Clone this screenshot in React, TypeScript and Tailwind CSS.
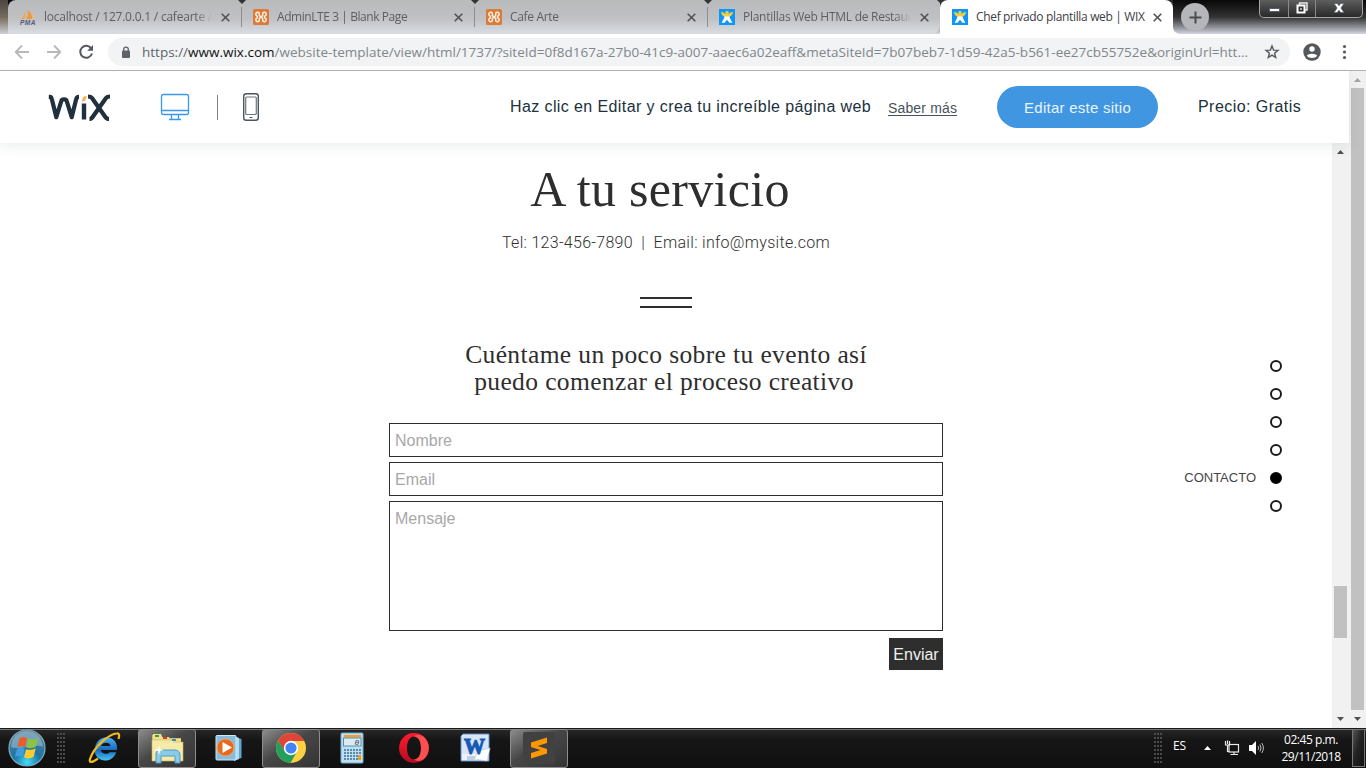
import React from "react";

const WixFavicon = () => (
  <svg width="16" height="16" viewBox="0 0 16 16" className="shrink-0">
    <rect width="16" height="16" fill="#0d96f6" />
    <path d="M5.200 7H10.800L10.600 8.600 13.400 13.800H10.400L8 10.800 5.600 13.800H2.600L5.400 8.600Z" fill="#fff" />
    <path d="M2 3C3.500 2.800 5 3.600 6.200 4.800H9.800C11 3.600 12.500 2.800 14 3 13.600 5.400 12.400 7 10.800 7.600H5.200C3.600 7 2.400 5.400 2 3Z" fill="#f3cf3a" />
    <circle cx="8" cy="3.500" r="1.800" fill="#d9c878" />
  </svg>
);

const XamppFavicon = () => (
  <svg width="16" height="16" viewBox="0 0 16 16" className="shrink-0">
    <rect width="16" height="16" rx="1.500" fill="#dd7a36" />
    <path d="M6.300 4.200A1.900 1.900 0 1 0 4 7C4.700 7.300 4.700 8.700 4 9A1.900 1.900 0 1 0 6.300 11.800V9.500L7.300 8.500H8.700L9.700 9.500V11.800A1.900 1.900 0 1 0 12 9C11.300 8.700 11.300 7.300 12 7A1.900 1.900 0 1 0 9.700 4.200V6.500L8.700 7.500H7.300L6.300 6.500Z" fill="none" stroke="#fbeee2" strokeWidth="1.500" />
  </svg>
);

const PmaFavicon = () => (
  <svg width="16" height="16" viewBox="0 0 16 16" className="shrink-0">
    <path d="M5 1.5C6 5 5.8 8 4.5 10H1C3.2 7.8 4.5 5 5 1.5Z" fill="#f3a64c" />
    <path d="M7.5 1C11 3.5 12.5 6.5 12 10H6.5C8 7 8.200 4 7.500 1Z" fill="#ee9a3a" />
    <path d="M12 4.500C13.800 6 14.500 8 14.500 10H12.800Z" fill="#f6bb74" />
    <text x="0" y="15.500" fontFamily="Liberation Sans" fontSize="6.500" fontWeight="700" fontStyle="italic" fill="#555a80" textLength="15.500">PMA</text>
  </svg>
);

const Close = () => (
  <svg width="9" height="9" viewBox="0 0 9 9" className="shrink-0">
    <path d="M0.700 0.700L8.300 8.300M8.300 0.700L0.700 8.300" stroke="#505357" strokeWidth="1.600" />
  </svg>
);

function Tab({ icon, title, active, spacing, last }: { icon: React.ReactNode; title: string; active?: boolean; spacing: string; last?: boolean }) {
  return (
    <div className={"relative flex h-[34px] w-[233px] shrink-0 items-center pl-[12px] " + (active ? "rounded-t-[8px] bg-white" : "")}>
      {icon}
      <div className={"ml-[8px] h-[20px] w-[168px] whitespace-nowrap text-[12px] leading-[20px] " + spacing + " " + (active ? "text-[#3c4043]" : "mask-r-from-90% mask-r-to-100% text-[#5b5f64]")}>
        {title}
      </div>
      <div className="ml-[9px] flex w-[10px]"><Close /></div>
      {!active && !last && <div className="absolute top-[7px] -right-px h-[20px] w-px bg-[#8b8d90]" />}
      {!active && <div className="absolute -top-px -right-[6px] h-[5px] w-[10px] bg-[#333] [clip-path:polygon(0_0,100%_0,50%_100%)]" />}
    </div>
  );
}

function Chrome() {
  return (
    <header className="shrink-0 font-['Open_Sans','Noto_Sans',sans-serif]">
      <div className="flex h-[34px] bg-linear-to-b from-[#050505] via-[#3a3a3a] via-50% to-[#d3d8e2]">
        <div className="h-full w-[8px] shrink-0 bg-linear-to-b from-[#4b4641] via-[#75695a] via-50% to-[#cdd1d8]" />
        <div className="flex w-[932px] shrink-0 rounded-tl-[8px] rounded-br-[8px] bg-linear-to-b from-[#b9babc] via-[#c0c1c4] via-55% to-[#d9dde2]">
          <Tab icon={<PmaFavicon />} title="localhost / 127.0.0.1 / cafearte /" spacing="tracking-[-0.220px]" />
          <Tab icon={<XamppFavicon />} title="AdminLTE 3 | Blank Page" spacing="tracking-[-0.430px]" />
          <Tab icon={<XamppFavicon />} title="Cafe Arte" spacing="tracking-[-0.330px]" />
          <Tab icon={<WixFavicon />} title="Plantillas Web HTML de Restaur" spacing="tracking-[-0.270px]" last />
        </div>
        <div className="flex bg-linear-to-b from-[#2b2b2b] from-50% to-white to-50%">
          <Tab icon={<WixFavicon />} title="Chef privado plantilla web | WIX" active spacing="tracking-[-0.340px]" />
        </div>
        <div className="h-full w-[193px] bg-white">
          <div className="flex h-full w-full rounded-bl-[7px] bg-linear-to-b from-[#080808] via-[#333] via-50% to-[#d3d6e2]">
            <div className="mt-[3px] ml-[8px] flex size-[28px] items-center justify-center rounded-full bg-[#b5b6b9]">
              <svg width="13" height="13" viewBox="0 0 13 13"><path d="M6.500 0.500V12.500M0.500 6.500H12.500" stroke="#4a4c50" strokeWidth="2" /></svg>
            </div>
            <div className="ml-[50px] flex h-[18px] w-[104px] rounded-b-[5px] border border-t-0 border-[#a5a5a5] bg-linear-to-b from-[#5e5e5e] to-[#292929]">
              <div className="flex w-[29px] items-center justify-center border-r border-[#8a8a8a]"><div className="mt-[3px] h-[4px] w-[11px] border border-[#555b70] bg-white" /></div>
              <div className="flex w-[27px] items-center justify-center border-r border-[#8a8a8a]">
                <svg width="12" height="12" viewBox="0 0 12 12" className="-mt-px"><path d="M3.500 3V1H11V8H9" fill="none" stroke="#e8e8ee" strokeWidth="1.500" /><rect x="1.500" y="3.500" width="7" height="7" fill="#333" stroke="#fff" strokeWidth="2" /><rect x="4" y="6" width="2" height="2" fill="#aaa" /></svg>
              </div>
              <div className="flex flex-1 items-center justify-center">
                <svg width="12" height="10" viewBox="0 0 12 10" className="-mt-px"><path d="M1 0.500H4.300L6 2.700 7.700 0.500H11L7.900 5 11 9.500H7.700L6 7.300 4.300 9.500H1L4.100 5Z" fill="#fff" stroke="#555b70" strokeWidth=".7" /></svg>
              </div>
            </div>
          </div>
        </div>
      </div>
      <div className="flex h-[37px] items-center border-b border-[#b3b3b3] bg-white">
        <svg width="108" height="36" viewBox="0 0 108 36" fill="none">
          <path d="M29 18H16M22 11.500L15.700 18 22 24.500M47 18H60M54 11.500L60.300 18 54 24.500" stroke="#b6b8ba" strokeWidth="1.800" />
          <path d="M91.300 14.500A6 6 0 1 0 92 19.500" stroke="#55585c" strokeWidth="2" />
          <path d="M93 11V16.800H87.200Z" fill="#55585c" />
        </svg>
        <div className="flex h-[28px] w-[1182px] items-center rounded-full bg-[#f1f3f4] pr-[10px] pl-[13px]">
          <svg width="10" height="13" viewBox="0 0 10 13"><rect x="1" y="4.500" width="8" height="7.500" rx="1" fill="#5f6368" /><path d="M2.700 5V3.500A2.300 2.300 0 0 1 7.300 3.500V5" fill="none" stroke="#5f6368" strokeWidth="1.300" /></svg>
          <div className="ml-[11px] h-[20px] w-[1110px] text-[13.500px] leading-[20px] whitespace-nowrap text-[#80868b]">
            <span className="text-[#5f6368]">https://</span><span className="text-[#111]">www.wix.com</span>/website-template/view/html/1737/?siteId=0f8d167a-27b0-41c9-a007-aaec6a02eaff&amp;metaSiteId=7b07beb7-1d59-42a5-b561-ee27cb55752e&amp;originUrl=htt...
          </div>
          <svg width="16" height="16" viewBox="0 0 16 16" className="ml-auto"><path d="M8 2L9.600 6.100 14 6.400 10.600 9.200 11.700 13.500 8 11.100 4.300 13.500 5.400 9.200 2 6.400 6.400 6.100Z" fill="none" stroke="#55585c" strokeWidth="1.400" /></svg>
        </div>
        <svg width="76" height="36" viewBox="0 0 76 36">
          <circle cx="22" cy="18" r="8.700" fill="#55585c" />
          <circle cx="22" cy="15" r="2.700" fill="#fff" /><path d="M16.800 21.700C18 19 26 19 27.200 21.700 25 24.700 19 24.700 16.800 21.700Z" fill="#fff" />
          <g fill="#55585c"><circle cx="54.500" cy="12.500" r="1.600" /><circle cx="54.500" cy="18" r="1.600" /><circle cx="54.500" cy="23.500" r="1.600" /></g>
        </svg>
      </div>
    </header>
  );
}

const Arrow = ({ down, light }: { down?: boolean; light?: boolean }) => (
  <svg width="17" height="17" viewBox="0 0 17 17" className="shrink-0">
    <path d={down ? "M5 7H12L8.500 11Z" : "M5 11H12L8.500 7Z"} fill={light ? "#a3a3a3" : "#505050"} />
  </svg>
);

function WixBar() {
  return (
    <div className="relative z-10 flex h-[72px] shrink-0 items-center bg-white shadow-[0_4px_12px_rgba(22,45,61,0.08)]">
      <svg width="280" height="72" viewBox="0 0 280 72" fill="none">
        <g stroke="#20303c" strokeWidth="4.200">
          <path d="M48.800 25.800H50C51 25.800 51.500 26.500 51.800 28L56.300 46.200 61.300 30C61.900 27.800 66.100 27.800 66.700 30L71.700 46.200 76.200 28C76.500 26.500 77.500 25.800 79 25.800" strokeLinejoin="round" />
          <path d="M84 32.500V48.500" strokeWidth="4.400" />
          <path d="M88 25.500C90 25.500 91 25.700 92 27L105 45.500C106 47 107 48 109 48M110 25.500C108 25.500 107 25.700 106 27L93 45.500C92 47 91 48 89.500 48" />
        </g>
        <path d="M82 30.500C82 27 83.500 25 86.500 25 86.500 28.500 85 30.500 82 30.500Z" fill="#fbad55" />
        <g stroke="#3899ec" strokeWidth="1.300">
          <rect x="161.500" y="23.500" width="27" height="20" rx="2" />
          <path d="M161.500 39.500H188.500M171.500 43.500V48.500M178.500 43.500V48.500M169 48.500H181" />
        </g>
        <path d="M217.500 24V49" stroke="#7a8289" />
        <rect x="243.700" y="22.700" width="14.600" height="26.600" rx="2.500" stroke="#4a5560" strokeWidth="1.400" />
        <rect x="245.700" y="26" width="10.600" height="17.500" rx="1" stroke="#6e7780" strokeWidth="1.200" />
        <path d="M249.500 46.500H252.500" stroke="#4a5560" />
      </svg>
      <div className="ml-[230px] flex w-[378px] whitespace-nowrap font-['Liberation_Sans',sans-serif] text-[16px] tracking-[0.400px] text-[#20303c]">
        Haz clic en Editar y crea tu increíble página web
      </div>
      <a className="w-[109px] pt-[3px] font-['Liberation_Sans',sans-serif] text-[14px] tracking-[0.150px] whitespace-nowrap text-[#46535d] underline underline-offset-2">Saber más</a>
      <button className="flex h-[42px] w-[161px] items-center justify-center rounded-full bg-[#4096e1] pt-[2px] font-['Liberation_Sans',sans-serif] text-[15px] tracking-[0.260px] text-[#eaf4fc]">Editar este sitio</button>
      <span className="ml-[40px] whitespace-nowrap font-['Liberation_Sans',sans-serif] text-[16px] tracking-[0.450px] text-[#20303c]">Precio: Gratis</span>
    </div>
  );
}

const fieldClass = "block w-full resize-none rounded-none border border-[#2e2e2e] bg-white px-[5px] text-[16px] outline-none placeholder:text-[#a8a8a8]";

function Contact() {
  return (
    <main className="flex w-[1332px] justify-center text-[#2e2e2e]">
      <div className="flex w-[554px] flex-col items-center">
        <h1 className="mt-[16px] mr-[12px] h-[60px] whitespace-nowrap font-['Liberation_Serif',serif] text-[50px] leading-[60px] tracking-[0.300px]">A tu servicio</h1>
        <p className="mt-[14px] h-[20px] whitespace-pre font-['Roboto',sans-serif] text-[16px] leading-[20px] font-light tracking-[0.300px]">Tel: 123-456-7890  |  Email: info@mysite.com</p>
        <div className="mt-[44px] h-[11px] w-[52px] border-y-2 border-[#2e2e2e]" />
        <h2 className="mt-[33px] whitespace-nowrap text-center font-['Liberation_Serif',serif] text-[25.500px] leading-[27px] tracking-[0.380px]">Cuéntame un poco sobre tu evento así<br /><span className="mr-[4px]">puedo comenzar el proceso creativo</span></h2>
        <form className="mt-[28px] flex w-full flex-col gap-[5px] font-['Liberation_Sans',sans-serif]">
          <input className={fieldClass + " h-[34px] pt-[2px]"} placeholder="Nombre" />
          <input className={fieldClass + " h-[34px] pt-[2px]"} placeholder="Email" />
          <textarea className={fieldClass + " h-[130px] pt-[5px]"} placeholder="Mensaje" />
          <button type="button" className="mt-[2px] h-[32px] w-[54px] self-end bg-[#2e2e2e] pt-[2px] text-[16px] text-[#f0f0f0]">Enviar</button>
        </form>
      </div>
      <nav className="absolute top-[217px] right-[67px] flex flex-col items-end gap-[16px]">
        {[0, 1, 2, 3, 4, 5].map((i) => (
          <div key={i} className="flex h-[12px] items-center gap-[14px]">
            {i === 4 && <span className="font-['Liberation_Sans',sans-serif] text-[13px] leading-[12px] text-[#444]">CONTACTO</span>}
            <i className={"size-[12px] rounded-full border-2 " + (i === 4 ? "border-black bg-black" : "border-[#1b1b1b]")} />
          </div>
        ))}
      </nav>
    </main>
  );
}

const StartOrb = () => (
  <svg width="40" height="40" viewBox="0 0 40 40">
    <defs>
      <radialGradient id="orb" cx=".5" cy=".9" r=".8"><stop offset="0" stopColor="#3ee0fb" /><stop offset=".45" stopColor="#1b75a8" /><stop offset="1" stopColor="#4e7d97" /></radialGradient>
    </defs>
    <circle cx="20" cy="20" r="18" fill="url(#orb)" stroke="#87a8b8" strokeWidth="1.200" />
    <path d="M4 19C5 8 12 3 20 3S35 8 36 19C28 15 14 23 4 19Z" fill="#c5dce6" opacity=".42" />
    <path d="M12.500 10.500C15 8.500 17.500 8.500 20 10L18 19C15 17.500 13 18 10.500 19.500Z" fill="#ee5b27" />
    <path d="M21.300 10.500C24.300 12 27.500 12 31 10L29 18.500C26 20.500 22.500 20.500 19.400 19.500Z" fill="#8bc53e" />
    <path d="M10 21C13 19.500 15 19.500 17.700 20.500L15.700 29C13.200 27.500 10.500 27.500 7.800 29Z" fill="#3f9ddd" />
    <path d="M19 21.200C22 22.200 25.500 22.200 28.700 20.300L26.700 28.800C23.500 30.900 20 30.900 17 29.200Z" fill="#fdcb2f" />
  </svg>
);

const IeIcon = () => (
  <svg width="34" height="34" viewBox="0 0 34 34">
    <defs><linearGradient id="ie" x1="0" y1="0" x2="0" y2="1"><stop stopColor="#4bb0ef" /><stop offset=".55" stopColor="#1769bf" /><stop offset="1" stopColor="#49c2f2" /></linearGradient></defs>
    <path d="M30 19H13.800C14.200 23 20.500 24 22.500 21.300H29.300C27 27.500 22 30 17.500 29.500 10 28.800 6.500 22.500 8 16.500 9.500 9.500 15 6 20 6.300 27 7 30.800 12 30 19ZM14 15H23.500C23 10.500 15.500 10.500 14 15Z" fill="url(#ie)" />
    <path d="M31.500 8C33 3.500 32 2 29.500 2.500 21 3.500 7 16 3 28 2 31.500 4 32.500 11 27.500" fill="none" stroke="#f2b91d" strokeWidth="2.200" />
  </svg>
);

const FolderIcon = () => (
  <svg width="34" height="32" viewBox="0 0 34 32">
    <path d="M2 3H11L13 6H31V28H2Z" fill="#d8bf63" />
    <path d="M3 2H11L12 5H19L20 7H31V27H3Z" fill="#f0de8b" /><path d="M2 8H22L24 10H33V29H2Z" fill="#f7e9a6" stroke="#cdb55e" strokeWidth=".6" />
    <rect x="5" y="3" width="4" height="2" fill="#28aa35" /><rect x="13" y="5" width="4" height="2" fill="#da3b2b" /><rect x="22" y="7" width="4" height="2" fill="#2c93da" />
    <path d="M6 31V22C6 19 8 18 10 18H25C28 18 30 20 30 23V31H25V24H11V31Z" fill="#8acbe8" stroke="#4a9cc6" />
    <path d="M9 13L10 17 14 18 10 19 9 23 8 19 4 18 8 17Z" fill="#fff" />
  </svg>
);

const MediaIcon = () => (
  <svg width="30" height="28" viewBox="0 0 30 28">
    <path d="M21 3L27.500 5V24L21 26Z" fill="#5ea6ce" /><path d="M20 2L25 4V25L20 27Z" fill="#b5dcee" /><rect x="2" y="1.500" width="20" height="24.500" rx="1" fill="#86bdde" stroke="#cce9f6" />
    <circle cx="11.500" cy="13.500" r="8.500" fill="#e66a1d" stroke="#f6a15d" /><path d="M8.500 8L18 13.500 8.500 19Z" fill="#fff" />
  </svg>
);

const ChromeIcon = () => (
  <svg width="32" height="32" viewBox="0 0 32 32">
    <circle cx="16" cy="16" r="15" fill="#fdd043" />
    <path d="M16 1A15 15 0 0 0 3 8.500L9.500 19.500 16 9H29.300A15 15 0 0 0 16 1Z" fill="#df4438" />
    <path d="M3 8.500A15 15 0 0 0 15.500 31L22 19.600A7 7 0 0 1 10 19.500Z" fill="#22a05b" />
    <circle cx="16" cy="16" r="7.200" fill="#fff" /><circle cx="16" cy="16" r="5.600" fill="#4284f3" />
  </svg>
);

const CalcIcon = () => (
  <svg width="24" height="32" viewBox="0 0 24 32">
    <rect x="1" y="1" width="22" height="30" rx="1" fill="#bcdff1" stroke="#72afcf" />
    <rect x="4" y="3" width="17" height="2.500" fill="#ef9e36" /><rect x="3.500" y="6" width="17.500" height="8" fill="#dcebf1" stroke="#5c8ba5" />
    <text x="14.500" y="13" fontFamily="Liberation Mono" fontStyle="italic" fontSize="8" fill="#243a47">0</text>
    {[17, 20, 23, 26].map((y) => <g key={y} fill="#5a8aa8">{[4, 7, 10, 13, 16, 19].map((x) => <rect key={x} x={x} y={y} width="2" height="2" />)}</g>)}
    <rect x="18" y="23" width="3" height="5" fill="#f19a20" />
  </svg>
);

const OperaIcon = () => (
  <svg width="32" height="32" viewBox="0 0 32 32">
    <defs><linearGradient id="op" x1="0" y1="0" x2="0" y2="1"><stop stopColor="#ff1b2d" /><stop offset="1" stopColor="#b40c20" /></linearGradient></defs>
    <path fillRule="evenodd" d="M16 1A15 15 0 1 0 16 31 15 15 0 1 0 16 1ZM16 4.500C20.500 4.500 23 9.500 23 16S20.500 27.500 16 27.500 9 22.500 9 16 11.500 4.500 16 4.500Z" fill="url(#op)" />
    <path d="M16 4.500C18 2.500 23 2.500 26 5A15 15 0 0 1 26 27C23 29.500 18 29.500 16 27.500 20.500 27.500 23 22.500 23 16S20.500 4.500 16 4.500Z" fill="#fb4e50" />
  </svg>
);

const WordIcon = () => (
  <svg width="32" height="30" viewBox="0 0 32 30">
    <path d="M4 1H30V28H2V3Z" fill="#edf3fb" stroke="#5b87c8" /><path d="M4 2H29V21H3V3Z" fill="#d6e5f7" />
    <path d="M20 18L31 15 28 28 15 26Z" fill="#fff" stroke="#b9c9df" strokeWidth=".7" /><path d="M8 24H16M8 26H15" stroke="#94abc8" />
    <text x="5" y="21" fontFamily="Liberation Serif" fontSize="24" fontWeight="700" fill="#1558b5" stroke="#1558b5" strokeWidth="1.200" textLength="21" lengthAdjust="spacingAndGlyphs">W</text>
  </svg>
);

const SublimeIcon = () => (
  <svg width="32" height="32" viewBox="0 0 32 32">
    <rect width="32" height="32" rx="2" fill="#414141" />
    <path d="M8 10.500L24 5.500V11L14.500 14 24 17V21.500L8 26.500V21L17.500 18 8 15Z" fill="#ff9800" />
  </svg>
);

function TaskButton({ children, active, className }: { children: React.ReactNode; active?: boolean; className: string }) {
  return (
    <div className={"flex h-[39px] w-[58px] shrink-0 items-center justify-center rounded-[3px] border " + (active ? "border-[#8d8d8d] bg-linear-to-br from-[#8c8c8c] via-[#464646] via-45% to-[#353535] " : "border-transparent ") + className}>
      {children}
    </div>
  );
}

function Grip() {
  return <div className="h-[30px] w-[9px] bg-[radial-gradient(circle_at_1px_1px,#4c4c4c_0.700px,transparent_1px)] bg-size-[3px_4px]" />;
}

function Taskbar() {
  return (
    <footer className="flex h-[40px] shrink-0 items-center bg-linear-to-b from-[#2a2a2a] via-[#161616] via-30% to-[#101010] font-['Open_Sans','Noto_Sans',sans-serif] text-white shadow-[inset_0_1px_0_#1b1b1b,inset_0_2px_0_#777]">
      <div className="flex w-[57px] justify-center"><div className="-ml-[3px]"><StartOrb /></div></div>
      <Grip />
      <TaskButton className="ml-[9px]"><IeIcon /></TaskButton>
      <TaskButton active className="ml-[5px]"><FolderIcon /></TaskButton>
      <TaskButton className="ml-[4px]"><MediaIcon /></TaskButton>
      <TaskButton active className="ml-[4px]"><ChromeIcon /></TaskButton>
      <TaskButton className="ml-[3px]"><CalcIcon /></TaskButton>
      <TaskButton className="ml-[4px]"><OperaIcon /></TaskButton>
      <TaskButton className="ml-[3px]"><WordIcon /></TaskButton>
      <TaskButton active className="ml-[6px]"><SublimeIcon /></TaskButton>
      <div className="ml-auto flex h-full items-center">
        <Grip />
        <span className="ml-[10px] w-[31px] pb-[4px] text-[12px] tracking-[-0.100px]">ES</span>
        <svg width="7" height="4" viewBox="0 0 7 4"><path d="M0 4H7L3.500 0Z" fill="#fff" /></svg>
        <svg width="16" height="16" viewBox="0 0 16 16" fill="none" className="ml-[13px]" stroke="#e8e8e8"><rect x="5" y="4.500" width="9.500" height="7.500" fill="#111" strokeWidth="1.200" /><path d="M6.500 14.500H14M10 12V14.500M1.500 1V5H5.500V1M3.500 0.500V4M3.500 5V11.500H5" strokeWidth="1.200" /></svg>
        <svg width="17" height="16" viewBox="0 0 17 16" className="ml-[8px]"><path d="M1 5H4L8 1V15L4 11H1Z" fill="#fff" /><path d="M10 6Q11.500 8 10 10M12 4.500Q14 8 12 11.500M13.800 3Q17 8 13.800 13" fill="none" stroke="#bbb" /></svg>
        <div className="ml-[12px] w-[68px] text-center text-[12px] leading-[17px] tracking-[-0.450px] whitespace-nowrap">02:45 p.m.<br />29/11/2018</div>
        <div className="ml-[7px] mr-px h-[38px] w-[13px] border border-[#777] bg-linear-to-br from-[#555] via-[#242424] via-45% to-[#111]" />
      </div>
    </footer>
  );
}

export default function App() {
  return (
    <div className="flex h-[768px] w-[1366px] flex-col overflow-hidden bg-white">
      <Chrome />
      <div className="flex min-h-0 flex-1">
        <div className="flex w-[1349px] flex-col">
          <WixBar />
          <div className="relative flex min-h-0 flex-1">
            <Contact />
            <div className="flex w-[17px] flex-col items-center bg-[#f1f1f1]">
              <Arrow />
              <div className="mt-[426px] h-[52px] w-[13px] bg-[#c1c1c1]" />
              <div className="mt-auto flex pb-px"><Arrow down /></div>
            </div>
          </div>
        </div>
        <div className="flex w-[17px] flex-col items-center bg-[#f1f1f1] pb-px">
          <Arrow light />
          <div className="min-h-0 w-[13px] flex-1 bg-[#c1c1c1]" />
          <Arrow down />
        </div>
      </div>
      <Taskbar />
    </div>
  );
}
